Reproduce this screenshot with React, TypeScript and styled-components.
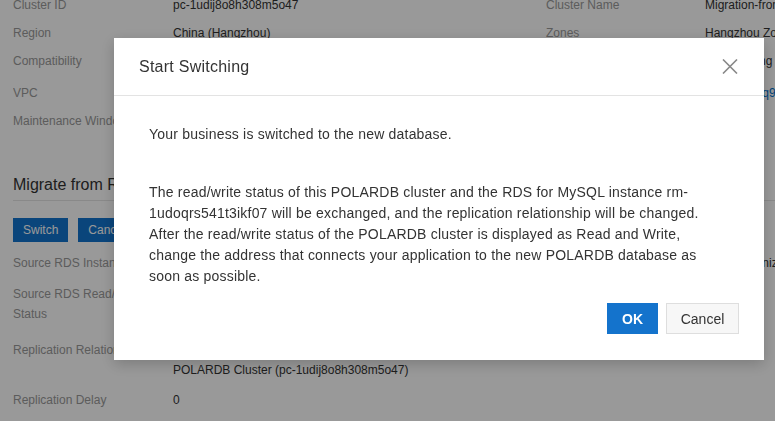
import * as React from "react";
import styled, { createGlobalStyle } from "styled-components";

const GlobalStyle = createGlobalStyle`
  html, body {
    margin: 0;
    padding: 0;
    background: #fff;
    overflow: hidden;
  }
  body {
    font-family: "Liberation Sans", Arial, sans-serif;
    color: #333;
  }
`;

const Page = styled.div`
  width: 775px;
  height: 421px;
  overflow: hidden;
  padding: 0 13px;
  box-sizing: border-box;
`;

// the page behind the dialog is scrolled a few pixels down
const Scroller = styled.div`
  margin-top: -5px;
  width: 900px;
`;

const Row = styled.div<{ $gap?: number }>`
  display: grid;
  grid-template-columns: 160px 373px 159px 1fr;
  font-size: 12px;
  line-height: 20px;
  margin-bottom: ${(p) => p.$gap ?? 8}px;
  white-space: nowrap;
`;

const Label = styled.div`
  color: #999;
  overflow: hidden;
`;

const Value = styled.div`
  color: #333;
`;

const Link = styled.span`
  color: #0070cc;
`;

const SectionTitle = styled.h3`
  margin: 42px -13px 0 0;
  font-size: 16px;
  font-weight: normal;
  line-height: 24px;
  padding-bottom: 3px;
  border-bottom: 1px solid #e5e5e5;
`;

const Actions = styled.div`
  display: flex;
  gap: 10px;
  margin: 17px 0 11px;
`;

const SmallButton = styled.button`
  height: 24px;
  padding: 0 10px;
  border: none;
  background: #1274ce;
  color: #fff;
  font-family: inherit;
  font-size: 12px;
`;

const Wrap = styled.div`
  white-space: normal;
  width: 300px;
`;

const Narrow = styled.div`
  white-space: normal;
  width: 130px;
`;

const Overlay = styled.div`
  position: fixed;
  inset: 0;
  background: rgba(0, 0, 0, 0.4);
`;

const Dialog = styled.div`
  position: absolute;
  left: 114px;
  top: 38px;
  width: 650px;
  background: #fff;
  box-shadow: 0 4px 14px rgba(0, 0, 0, 0.2);
`;

const Header = styled.div`
  height: 57px;
  display: flex;
  align-items: center;
  justify-content: space-between;
  padding: 0 26px 0 25px;
  border-bottom: 1px solid #e3e3e3;
`;

const Title = styled.div`
  font-size: 16px;
  letter-spacing: 0.25px;
  color: #333;
`;

const Close = styled.button`
  border: none;
  background: none;
  padding: 0;
  display: flex;
  cursor: pointer;
`;

const Body = styled.div`
  padding: 28px 35px 0;
  font-size: 14px;
  line-height: 21px;
  color: #333;
  letter-spacing: 0.2px;
`;

const Para = styled.p<{ $top?: number }>`
  margin: ${(p) => p.$top ?? 0}px 0 0;
`;

const Footer = styled.div`
  display: flex;
  justify-content: flex-end;
  gap: 8px;
  padding: 16px 25px 26px;
`;

const DialogButton = styled.button<{ $primary?: boolean }>`
  height: 31px;
  box-sizing: border-box;
  padding: 0 ${(p) => (p.$primary ? 14 : 13)}px;
  min-width: ${(p) => (p.$primary ? 51 : 73)}px;
  font-family: inherit;
  font-size: 14px;
  font-weight: ${(p) => (p.$primary ? "bold" : "normal")};
  color: ${(p) => (p.$primary ? "#fff" : "#333")};
  background: ${(p) => (p.$primary ? "#1473cc" : "#f7f7f7")};
  border: 1px solid ${(p) => (p.$primary ? "#1473cc" : "#dedede")};
`;

type Item = { l: string; v: string; rl: string; rv: string; link?: boolean; gap?: number };

const info: Item[] = [
  { l: "Cluster ID", v: "pc-1udij8o8h308m5o47", rl: "Cluster Name", rv: "Migration-from-RDS" },
  { l: "Region", v: "China (Hangzhou)", rl: "Zones", rv: "Hangzhou Zone G" },
  { l: "Compatibility", v: "100% Compatible with MySQL 5.6", rl: "Storage", rv: "Auto Scaling", gap: 12 },
  { l: "VPC", v: "vpc-bp1a2b3c4d5e6f7g8", rl: "VSwitch", rv: "vsw-bp1nxq9", link: true },
  { l: "Maintenance Window", v: "02:00-03:00", rl: "", rv: "" },
];

const migration: Item[] = [
  { l: "Source RDS Instance", v: "rm-1udoqrs541t3ikf07", rl: "Sync Status", rv: "Resynchronizing", gap: 11 },
  { l: "Source RDS Read/Write Status", v: "Read Only", rl: "", rv: "", gap: 16 },
  { l: "Replication Relationship", v: "", rl: "", rv: "", gap: 10 },
  { l: "Replication Delay", v: "0", rl: "", rv: "" },
];

function CloseIcon() {
  return (
    <svg width="16" height="15" viewBox="0 0 16 15">
      <path d="M1 0.5 L15 14.5 M15 0.5 L1 14.5" stroke="#888" strokeWidth="1.6" fill="none" />
    </svg>
  );
}

export default function App() {
  return (
    <>
      <GlobalStyle />
      <Page>
        <Scroller>
          {info.map((r) => (
            <Row key={r.l} $gap={r.gap}>
              <Label>{r.l}</Label>
              <Value>{r.v}</Value>
              <Label>{r.rl}</Label>
              <Value>{r.link ? <Link>{r.rv}</Link> : r.rv}</Value>
            </Row>
          ))}
          <SectionTitle>Migrate from RDS to POLARDB</SectionTitle>
          <Actions>
            <SmallButton>Switch</SmallButton>
            <SmallButton>Cancel Migration</SmallButton>
          </Actions>
          {migration.map((r) => (
            <Row key={r.l} $gap={r.gap}>
              <Label>
                {r.l === "Source RDS Read/Write Status" ? <Narrow>{r.l}</Narrow> : r.l}
              </Label>
              <Value>
                {r.l === "Replication Relationship" ? (
                  <Wrap>
                    Source RDS Instance (rm-1udoqrs541t3ikf07) →
                    <br />
                    POLARDB Cluster (pc-1udij8o8h308m5o47)
                  </Wrap>
                ) : (
                  r.v
                )}
              </Value>
              <Label>{r.rl}</Label>
              <Value>{r.rv}</Value>
            </Row>
          ))}
        </Scroller>
      </Page>
      <Overlay>
        <Dialog>
          <Header>
            <Title>Start Switching</Title>
            <Close aria-label="Close">
              <CloseIcon />
            </Close>
          </Header>
          <Body>
            <Para>Your business is switched to the new database.</Para>
            <Para $top={37}>
              The read/write status of this POLARDB cluster and the RDS for MySQL
              instance rm-1udoqrs541t3ikf07 will be exchanged, and the replication
              relationship will be changed. After the read/write status of the
              POLARDB cluster is displayed as Read and Write, change the address
              that connects your application to the new POLARDB database as soon
              as possible.
            </Para>
          </Body>
          <Footer>
            <DialogButton $primary>OK</DialogButton>
            <DialogButton>Cancel</DialogButton>
          </Footer>
        </Dialog>
      </Overlay>
    </>
  );
}
